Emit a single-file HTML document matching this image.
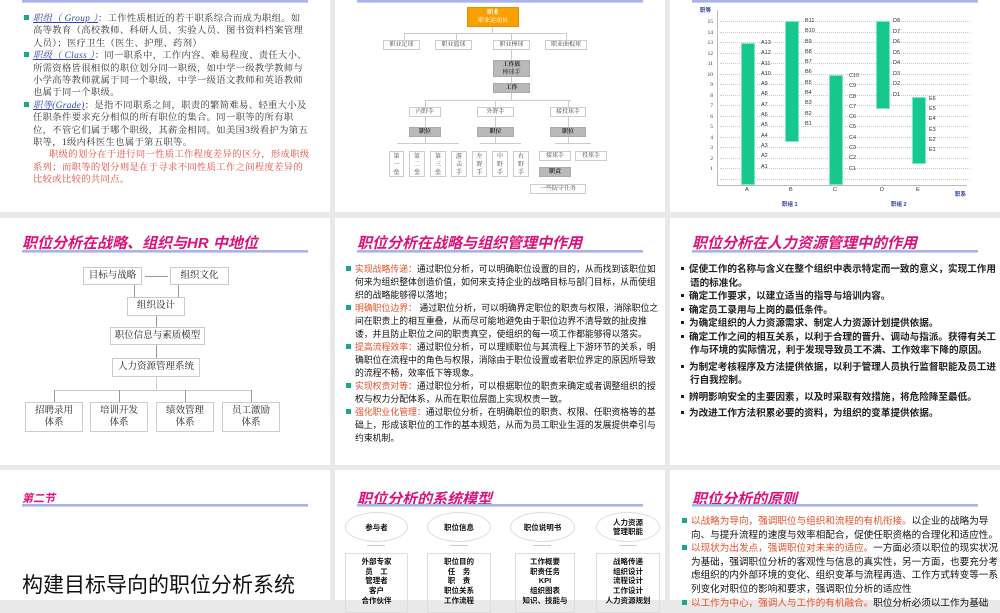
<!DOCTYPE html>
<html><head><meta charset="utf-8"><style>
*{margin:0;padding:0;box-sizing:border-box}
body{width:1000px;height:600px;background:#e9e9e9;position:relative;overflow:hidden;font-family:"Liberation Sans","Noto Sans CJK SC",sans-serif;color:#111}
.p{position:absolute;background:#fff;overflow:hidden}
.a{position:absolute;white-space:nowrap}
.hl{position:absolute;height:3px;background:#a8b4ea;border-bottom:1px solid #c8cff0}
.t{position:absolute;font-weight:bold;font-style:italic;color:#e0107a;font-size:15px;white-space:nowrap}
.b{position:absolute;border:1px solid #ccc;background:#fff;text-align:center;font-family:"Liberation Serif","Noto Serif CJK SC",serif;font-size:6px;color:#444;line-height:8px;white-space:nowrap;overflow:hidden}
.g{background:#b9b9b9;border-color:#aaa;font-weight:bold;color:#222}
.v{line-height:8px;padding-top:1px}
.ln{position:absolute;background:#ccc}
.sq{display:inline-block;width:5px;height:5px;background:#1aa88a;margin-right:4px;vertical-align:1px;text-indent:0}
.sm{display:inline-block;width:3px;height:3px;background:#222;margin-right:5px;vertical-align:2px}
.txt{position:absolute;line-height:13px}
.txt p{padding-left:9px;text-indent:-9px}
.r{color:#e8502a}
.fb{position:absolute;border:1px solid #ccc;background:#fff;font-family:"Liberation Serif","Noto Serif CJK SC",serif;font-size:9.5px;text-align:center;line-height:12px;color:#222;white-space:nowrap}
.bar{position:absolute;background:#16c88e;border:1px solid #7ee8c8}
.cl{position:absolute;font-size:5.5px;color:#333;white-space:nowrap}
.gr{position:absolute;left:720px;width:250px;border-top:1px dotted #ccc;height:0}
.el{position:absolute;border:1px solid #ddd;border-radius:50%;font-size:7.5px;font-weight:bold;text-align:center;line-height:9px}
.bx{position:absolute;border:1px solid #ddd;font-size:7.5px;font-weight:bold;text-align:center;line-height:9.7px;padding-top:3px;white-space:nowrap}
</style></head><body>

<!-- Row1 col1 -->
<div class="p" style="left:0;top:0;width:330px;height:212px">
<div class="hl" style="left:22px;top:0;width:286px"></div>
<div class="txt" style="left:24px;top:13px;width:286px;font-family:'Liberation Serif','Noto Serif CJK SC',serif;font-size:9.3px;letter-spacing:0.35px;line-height:12.4px;color:#333">
<p><span class="sq"></span><i style="color:#3344bb;text-decoration:underline">职组（ Group ）</i>：工作性质相近的若干职系综合而成为职组。如高等教育（高校教师、科研人员、实验人员、图书资料档案管理人员）；医疗卫生（医生、护理、药剂）</p>
<p><span class="sq"></span><i style="color:#3344bb;text-decoration:underline">职级（ Class ）</i>：同一职系中，工作内容、难易程度、责任大小、所需资格皆很相似的职位划分同一职级，如中学一级教学教师与小学高等教师就属于同一个职级，中学一级语文教师和英语教师也属于同一个职级。</p>
<p><span class="sq"></span><i style="color:#3344bb;text-decoration:underline">职等(Grade)</i>：是指不同职系之间，职责的繁简难易、轻重大小及任职条件要求充分相似的所有职位的集合。同一职等的所有职位，不管它们属于哪个职级，其薪金相同。如美国3级看护为第五职等，1级内科医生也属于第五职等。</p>
<p style="color:#e04a3a;text-indent:16px">职级的划分在于进行同一性质工作程度差异的区分，形成职级系列；而职等的划分则是在于寻求不同性质工作之间程度差异的比较或比较的共同点。</p>
</div>
</div>

<!-- Row1 col2 org chart -->
<div class="p" style="left:335px;top:0;width:330px;height:212px"></div>
<div class="hl" style="left:357px;top:0;width:286px"></div>
<div class="b" style="left:467px;top:7px;width:52px;height:20px;background:#f7a000;border-color:#e89000;color:#fff;font-weight:bold;padding-top:1px">职业<br><span style="font-weight:normal">职业运动员</span></div>
<div class="ln" style="left:492px;top:27px;width:1px;height:6px"></div>
<div class="ln" style="left:404px;top:33px;width:162px;height:1px"></div>
<div class="ln" style="left:404px;top:33px;width:1px;height:7px"></div><div class="ln" style="left:456px;top:33px;width:1px;height:7px"></div><div class="ln" style="left:511px;top:33px;width:1px;height:7px"></div><div class="ln" style="left:566px;top:33px;width:1px;height:7px"></div>
<div class="b" style="left:383px;top:40px;width:37px;height:10px">职业足球</div>
<div class="b" style="left:435px;top:40px;width:37px;height:10px">职业篮球</div>
<div class="b" style="left:493px;top:40px;width:37px;height:10px">职业棒球</div>
<div class="b" style="left:545px;top:40px;width:42px;height:10px">职业曲棍球</div>
<div class="ln" style="left:511px;top:50px;width:1px;height:50px"></div>
<div class="b g" style="left:493px;top:60px;width:37px;height:17px;padding-top:0">工作族<br><span style="font-weight:normal">棒球手</span></div>
<div class="b g" style="left:493px;top:83px;width:37px;height:10px">工作</div>
<div class="ln" style="left:425px;top:100px;width:146px;height:1px"></div>
<div class="ln" style="left:425px;top:100px;width:1px;height:43px"></div><div class="ln" style="left:495px;top:100px;width:1px;height:43px"></div><div class="ln" style="left:568px;top:100px;width:1px;height:43px"></div>
<div class="b" style="left:409px;top:107px;width:32px;height:10px">内野手</div>
<div class="b" style="left:477px;top:107px;width:37px;height:10px">外野手</div>
<div class="b" style="left:550px;top:107px;width:36px;height:10px">接投球手</div>
<div class="b g" style="left:409px;top:127px;width:32px;height:10px">职位</div>
<div class="b g" style="left:477px;top:127px;width:37px;height:10px">职位</div>
<div class="b g" style="left:550px;top:127px;width:36px;height:10px">职位</div>
<div class="ln" style="left:397px;top:143px;width:62px;height:1px"></div>
<div class="ln" style="left:480px;top:143px;width:41px;height:1px"></div>
<div class="ln" style="left:555px;top:143px;width:36px;height:1px"></div>
<div class="b v" style="left:389px;top:151px;width:15px;height:26px">第<br>一<br>垒</div>
<div class="b v" style="left:409px;top:151px;width:16px;height:26px">第<br>二<br>垒</div>
<div class="b v" style="left:430px;top:151px;width:16px;height:26px">第<br>三<br>垒</div>
<div class="b v" style="left:451px;top:151px;width:16px;height:26px">游<br>击<br>手</div>
<div class="b v" style="left:472px;top:151px;width:15px;height:26px">左<br>野<br>手</div>
<div class="b v" style="left:492px;top:151px;width:16px;height:26px">中<br>野<br>手</div>
<div class="b v" style="left:513px;top:151px;width:16px;height:26px">右<br>野<br>手</div>
<div class="b" style="left:539px;top:151px;width:32px;height:10px">接球手</div>
<div class="b" style="left:575px;top:151px;width:32px;height:10px">投球手</div>
<div class="b g" style="left:539px;top:167px;width:32px;height:10px">职责</div>
<div class="b" style="left:530px;top:184px;width:56px;height:10px">一些防守任务</div>

<!-- Row1 col3 chart -->
<div class="p" style="left:670px;top:0;width:330px;height:212px"></div>
<div class="hl" style="left:692px;top:0;width:286px"></div>
<div class="cl" style="left:700px;top:6px;color:#2a3a99;font-weight:bold">职等</div>
<div class="ln" style="left:717px;top:10px;width:1px;height:175px;background:#bbb"></div>
<div class="ln" style="left:717px;top:185px;width:250px;height:1px;background:#bbb"></div>
<div class="gr" style="top:21px"></div><div class="gr" style="top:31.5px"></div><div class="gr" style="top:42px"></div><div class="gr" style="top:52.5px"></div><div class="gr" style="top:63px"></div><div class="gr" style="top:73.5px"></div><div class="gr" style="top:84px"></div><div class="gr" style="top:94.5px"></div><div class="gr" style="top:105px"></div><div class="gr" style="top:115.5px"></div><div class="gr" style="top:126px"></div><div class="gr" style="top:136.5px"></div><div class="gr" style="top:147px"></div><div class="gr" style="top:157.5px"></div><div class="gr" style="top:168px"></div><div class="gr" style="top:178.5px"></div>
<div class="cl" style="left:703px;top:17px;line-height:10.5px;text-align:right;width:10px;font-family:'Liberation Serif',serif">15<br>14<br>13<br>12<br>11<br>10<br>9<br>8<br>7<br>6<br>5<br>4<br>3<br>2<br>1</div>
<div class="bar" style="left:741px;top:43px;width:14px;height:142px"></div>
<div class="bar" style="left:785px;top:21px;width:14px;height:121px"></div>
<div class="bar" style="left:829px;top:75px;width:14px;height:110px"></div>
<div class="bar" style="left:876px;top:21px;width:14px;height:88px"></div>
<div class="bar" style="left:912px;top:97px;width:14px;height:67px"></div>
<div class="cl" style="left:761px;top:38px;line-height:10.3px">A13<br>A12<br>A11<br>A10<br>A9<br>A8<br>A7<br>A6<br>A5<br>A4<br>A3<br>A2<br>A1</div>
<div class="cl" style="left:805px;top:16px;line-height:10.3px">B11<br>B10<br>B9<br>B8<br>B7<br>B6<br>B5<br>B4<br>B3<br>B2<br>B1</div>
<div class="cl" style="left:849px;top:71px;line-height:10.3px">C10<br>C9<br>C8<br>C7<br>C6<br>C5<br>C4<br>C3<br>C2<br>C1</div>
<div class="cl" style="left:893px;top:16px;line-height:10.5px">D8<br>D7<br>D6<br>D5<br>D4<br>D3<br>D2<br>D1</div>
<div class="cl" style="left:929px;top:94px;line-height:10.2px">E6<br>E5<br>E4<br>E3<br>E2<br>E1</div>
<div class="cl" style="left:745px;top:187px">A</div><div class="cl" style="left:789px;top:187px">B</div><div class="cl" style="left:833px;top:187px">C</div><div class="cl" style="left:880px;top:187px">D</div><div class="cl" style="left:916px;top:187px">E</div>
<div class="cl" style="left:782px;top:200px;color:#2a3a99;font-weight:bold">职组 1</div>
<div class="cl" style="left:891px;top:200px;color:#2a3a99;font-weight:bold">职组 2</div>
<div class="cl" style="left:955px;top:190px;color:#2a3a99;font-weight:bold">职系</div>

<!-- Row2 col1 -->
<div class="p" style="left:0;top:218px;width:330px;height:247px"></div>
<div class="t" style="left:22px;top:232px">职位分析在战略、组织与HR 中地位</div>
<div class="hl" style="left:22px;top:250px;width:286px"></div>
<div class="fb" style="left:83px;top:267px;width:59px;height:18px;line-height:16px">目标与战略</div>
<div class="fb" style="left:170px;top:267px;width:59px;height:18px;line-height:16px">组织文化</div>
<div class="ln" style="left:145px;top:276px;width:23px;height:1px;background:#999"></div>
<div class="ln" style="left:134px;top:285px;width:1px;height:12px;background:#999"></div>
<div class="ln" style="left:178px;top:285px;width:1px;height:12px;background:#999"></div>
<div class="fb" style="left:127px;top:297px;width:58px;height:19px;line-height:17px">组织设计</div>
<div class="ln" style="left:156px;top:316px;width:1px;height:11px;background:#999"></div>
<div class="fb" style="left:110px;top:327px;width:95px;height:18px;line-height:16px">职位信息与素质模型</div>
<div class="ln" style="left:156px;top:345px;width:1px;height:13px;background:#999"></div>
<div class="fb" style="left:112px;top:358px;width:88px;height:19px;line-height:17px">人力资源管理系统</div>
<div class="ln" style="left:156px;top:377px;width:1px;height:13px"></div>
<div class="ln" style="left:54px;top:390px;width:198px;height:1px"></div>
<div class="ln" style="left:54px;top:390px;width:1px;height:12px;background:#999"></div><div class="ln" style="left:119px;top:390px;width:1px;height:12px;background:#999"></div><div class="ln" style="left:185px;top:390px;width:1px;height:12px;background:#999"></div><div class="ln" style="left:251px;top:390px;width:1px;height:12px;background:#999"></div>
<div class="fb" style="left:25px;top:402px;width:58px;height:30px;padding-top:2px">招聘录用<br>体系</div>
<div class="fb" style="left:90px;top:402px;width:58px;height:30px;padding-top:2px">培训开发<br>体系</div>
<div class="fb" style="left:156px;top:402px;width:58px;height:30px;padding-top:2px">绩效管理<br>体系</div>
<div class="fb" style="left:222px;top:402px;width:58px;height:30px;padding-top:2px">员工激励<br>体系</div>

<!-- Row2 col2 -->
<div class="p" style="left:335px;top:218px;width:330px;height:247px"></div>
<div class="t" style="left:357px;top:232px">职位分析在战略与组织管理中作用</div>
<div class="hl" style="left:357px;top:250px;width:286px"></div>
<div class="txt" style="left:346px;top:263px;width:318px;font-size:8.85px">
<p><span class="sq"></span><span class="r">实现战略传递：</span>通过职位分析，可以明确职位设置的目的，从而找到该职位如何来为组织整体创造价值，如何来支持企业的战略目标与部门目标，从而使组织的战略能够得以落地；</p>
<p><span class="sq"></span><span class="r">明确职位边界：</span> 通过职位分析，可以明确界定职位的职责与权限，消除职位之间在职责上的相互重叠，从而尽可能地避免由于职位边界不清导致的扯皮推诿，并且防止职位之间的职责真空，使组织的每一项工作都能够得以落实。</p>
<p><span class="sq"></span><span class="r">提高流程效率：</span>通过职位分析，可以理顺职位与其流程上下游环节的关系，明确职位在流程中的角色与权限，消除由于职位设置或者职位界定的原因所导致的流程不畅，效率低下等现象。</p>
<p><span class="sq"></span><span class="r">实现权责对等：</span>通过职位分析，可以根据职位的职责来确定或者调整组织的授权与权力分配体系，从而在职位层面上实现权责一致。</p>
<p><span class="sq"></span><span class="r">强化职业化管理：</span>通过职位分析，在明确职位的职责、权限、任职资格等的基础上，形成该职位的工作的基本规范，从而为员工职业生涯的发展提供牵引与约束机制。</p>
</div>

<!-- Row2 col3 -->
<div class="p" style="left:670px;top:218px;width:330px;height:247px"></div>
<div class="t" style="left:692px;top:232px">职位分析在人力资源管理中的作用</div>
<div class="hl" style="left:692px;top:250px;width:286px"></div>
<div class="txt" style="left:681px;top:263px;width:318px;font-size:9.6px;line-height:13.5px;font-weight:bold;color:#222">
<p><span class="sm"></span>促使工作的名称与含义在整个组织中表示特定而一致的意义，实现工作用语的标准化。</p>
<p><span class="sm"></span>确定工作要求，以建立适当的指导与培训内容。</p>
<p><span class="sm"></span>确定员工录用与上岗的最低条件。</p>
<p><span class="sm"></span>为确定组织的人力资源需求、制定人力资源计划提供依据。</p>
<p><span class="sm"></span>确定工作之间的相互关系，以利于合理的晋升、调动与指派。获得有关工作与环境的实际情况，利于发现导致员工不满、工作效率下降的原因。</p>
<p style="margin-top:3px"><span class="sm"></span>为制定考核程序及方法提供依据，以利于管理人员执行监督职能及员工进行自我控制。</p>
<p style="margin-top:3px"><span class="sm"></span>辨明影响安全的主要因素，以及时采取有效措施，将危险降至最低。</p>
<p style="margin-top:3px"><span class="sm"></span>为改进工作方法积累必要的资料，为组织的变革提供依据。</p>
</div>

<!-- Row3 col1 -->
<div class="p" style="left:0;top:470px;width:330px;height:130px"></div>
<div class="t" style="left:22px;top:490px;font-size:11px">第二节</div>
<div class="hl" style="left:22px;top:504px;width:286px"></div>
<div class="a" style="left:22px;top:569px;font-size:21px;color:#111">构建目标导向的职位分析系统</div>

<!-- Row3 col2 -->
<div class="p" style="left:335px;top:470px;width:330px;height:130px"></div>
<div class="t" style="left:357px;top:488px">职位分析的系统模型</div>
<div class="hl" style="left:357px;top:504px;width:286px"></div>
<div class="el" style="left:345px;top:512px;width:63px;height:30px;padding-top:10px">参与者</div>
<div class="el" style="left:427px;top:512px;width:64px;height:30px;padding-top:10px">职位信息</div>
<div class="el" style="left:510px;top:512px;width:65px;height:30px;padding-top:10px">职位说明书</div>
<div class="el" style="left:596px;top:512px;width:64px;height:30px;padding-top:5px">人力资源<br>管理职能</div>
<div class="ln" style="left:367px;top:545px;width:18px;height:1px"></div><div class="ln" style="left:450px;top:545px;width:18px;height:1px"></div><div class="ln" style="left:533px;top:545px;width:18px;height:1px"></div><div class="ln" style="left:619px;top:545px;width:18px;height:1px"></div>
<div class="bx" style="left:345px;top:553px;width:63px;height:60px">外部专家<br>员　工<br>管理者<br>客户<br>合作伙伴</div>
<div class="bx" style="left:427px;top:553px;width:64px;height:60px">职位目的<br>任　务<br>职　责<br>职位关系<br>工作流程</div>
<div class="bx" style="left:515px;top:553px;width:60px;height:60px">工作概要<br>职责任务<br>KPI<br>组织图表<br>知识、技能与</div>
<div class="bx" style="left:596px;top:553px;width:64px;height:60px">战略传递<br>组织设计<br>流程设计<br>工作设计<br>人力资源规划</div>

<!-- Row3 col3 -->
<div class="p" style="left:670px;top:470px;width:330px;height:130px"></div>
<div class="t" style="left:692px;top:488px">职位分析的原则</div>
<div class="hl" style="left:692px;top:504px;width:286px"></div>
<div class="txt" style="left:682px;top:515px;width:318px;font-size:9.6px;line-height:13.6px">
<p><span class="sq"></span><span class="r">以战略为导向，强调职位与组织和流程的有机衔接。</span>以企业的战略为导向、与提升流程的速度与效率相配合，促使任职资格的合理化和适应性。</p>
<p><span class="sq"></span><span class="r">以现状为出发点，强调职位对未来的适应。</span>一方面必须以职位的现实状况为基础，强调职位分析的客观性与信息的真实性，另一方面，也要充分考虑组织的内外部环境的变化、组织变革与流程再造、工作方式转变等一系列变化对职位的影响和要求，强调职位分析的适应性</p>
<p><span class="sq"></span><span class="r">以工作为中心，强调人与工作的有机融合。</span>职位分析必须以工作为基础</p>
</div>
</body></html>
